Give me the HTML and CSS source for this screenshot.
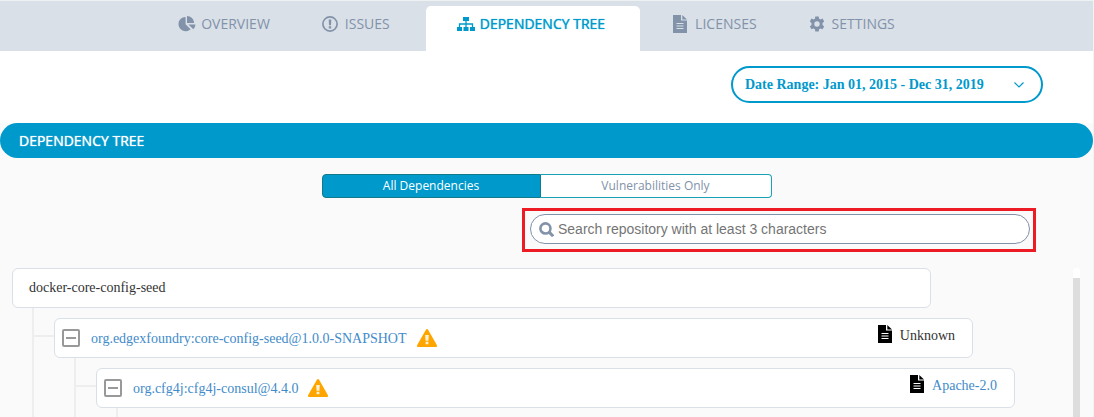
FILE: index.html
```html
<!DOCTYPE html>
<html lang="en">
<head>
<meta charset="utf-8">
<meta name="viewport" content="width=device-width, initial-scale=1">
<title>Dependency Tree</title>
<link rel="stylesheet" href="styles.css">
</head>
<body>
<svg class="sprite" aria-hidden="true">
  <symbol id="i-doc" viewBox="0 0 14 18"><path fill="currentColor" d="M0 0h8v5.500h6V18H0z"/><path fill="currentColor" d="M9.300 0L14 4.500H9.300z"/><path fill="none" stroke="var(--line, #d9e0e8)" d="M3.500 8.500h7M3.500 11h7M3.500 13.500h7"/></symbol>
  <symbol id="i-warn" viewBox="0 0 20 18"><path fill="#ffa500" d="M8.900.7a1.300 1.300 0 0 1 2.200 0l8.700 15.400a1.200 1.200 0 0 1-1.100 1.900H1.300a1.200 1.200 0 0 1-1.100-1.900z"/><path fill="#fff2d6" d="M8.200 6h3.600l-.4 5.700H8.600zM8.600 12.700h2.800v2.600H8.600z"/></symbol>
  <symbol id="i-minus" viewBox="0 0 18 18"><rect x="1" y="1" width="16" height="16" rx="1" fill="#fff" stroke="#999" stroke-width="2"/><path d="M4 9h10" stroke="#999" stroke-width="2"/></symbol>
</svg>

<nav class="tabs">
  <a class="tab" href="#overview"><svg class="icon pie" viewBox="0 0 18 17"><path fill="currentColor" d="M7.500 1v7.700l5.300 5.400A7.600 7.600 0 1 1 7.500 1z"/><path fill="currentColor" d="M9 0a7.700 7.700 0 0 1 7.600 7.500H9zM10.500 9H18a7.500 7.500 0 0 1-2.300 5.200z"/></svg>OVERVIEW</a>
  <a class="tab" href="#issues"><svg class="icon alert" viewBox="0 0 16 16"><circle cx="8" cy="8" r="7.100" fill="none" stroke="currentColor" stroke-width="1.700"/><path fill="currentColor" d="M6.700 3.500h2.600l-.3 5.700H7zM6.800 10.300h2.400v2.200H6.800z"/></svg>ISSUES</a>
  <a class="tab active" href="#tree" aria-current="page"><svg class="icon pie" viewBox="0 0 18 16"><path fill="currentColor" d="M6 1h6v4H6zM0 11h5v4H0zM6.500 11h5v4h-5zM13 11h5v4h-5z"/><path fill="none" stroke="currentColor" stroke-width="1.300" d="M9 5v6M2.500 11V8h13v3"/></svg>DEPENDENCY TREE</a>
  <a class="tab" href="#licenses"><svg class="icon doc"><use href="#i-doc"/></svg>LICENSES</a>
  <a class="tab" href="#settings"><svg class="icon alert" viewBox="0 0 16 16"><path fill="currentColor" fill-rule="evenodd" d="M6.300.5h3.400l.4 2.200 1.300.7 2.100-.8 1.700 2.900-1.700 1.500v1.900l1.700 1.500-1.700 2.900-2.100-.8-1.300.7-.4 2.300H6.300l-.4-2.300-1.300-.7-2.100.8-1.700-2.900 1.700-1.500V7L.8 5.500l1.700-2.900 2.100.8 1.300-.7zM8 5.300a2.700 2.700 0 1 0 0 5.400 2.700 2.700 0 0 0 0-5.400z"/></svg>SETTINGS</a>
</nav>

<div class="filters">
  <button class="range" type="button">Date Range: Jan 01, 2015 - Dec 31, 2019
    <svg class="chevron" viewBox="0 0 12 8"><path fill="none" stroke="currentColor" stroke-width="1.200" d="M1.500 1.500L6 6l4.500-4.500"/></svg>
  </button>
</div>

<main class="panel">
  <h1 class="title">DEPENDENCY TREE</h1>
  <div class="toggle">
    <button class="option selected" type="button" aria-pressed="true">All Dependencies</button>
    <button class="option" type="button" aria-pressed="false">Vulnerabilities Only</button>
  </div>
  <div class="highlight">
    <label class="search">
      <svg class="glass" viewBox="0 0 14 14"><circle cx="6" cy="6" r="4.700" fill="none" stroke="currentColor" stroke-width="2.400"/><path d="M9.200 9.200l4 4" stroke="currentColor" stroke-width="2.800"/></svg>
      <input class="query" type="text" aria-label="Search repository" placeholder="Search repository with at least 3 characters">
    </label>
  </div>
  <div class="viewport">
    <ul class="tree">
      <li class="branch">
        <div class="node root"><span class="name">docker-core-config-seed</span></div>
        <ul class="children">
          <li class="branch child">
            <div class="node">
              <button class="collapse" type="button" aria-label="Collapse"><svg class="box"><use href="#i-minus"/></svg></button>
              <a class="name" href="#seed">org.edgexfoundry:core-config-seed@1.0.0-SNAPSHOT</a>
              <svg class="warn"><use href="#i-warn"/></svg>
              <span class="license"><svg class="file"><use href="#i-doc"/></svg><span class="label">Unknown</span></span>
            </div>
            <ul class="children">
              <li class="branch child">
                <div class="node">
                  <button class="collapse" type="button" aria-label="Collapse"><svg class="box"><use href="#i-minus"/></svg></button>
                  <a class="name" href="#consul">org.cfg4j:cfg4j-consul@4.4.0</a>
                  <svg class="warn"><use href="#i-warn"/></svg>
                  <span class="license"><svg class="file"><use href="#i-doc"/></svg><a class="label" href="#apache">Apache-2.0</a></span>
                </div>
                <ul class="children"></ul>
              </li>
            </ul>
          </li>
        </ul>
      </li>
    </ul>
    <div class="scrollbar"></div>
  </div>
</main>
</body>
</html>
```
FILE: styles.css
```css
* { box-sizing: border-box; }

html, body { height: 100%; }

body {
  margin: 0;
  display: flex;
  flex-direction: column;
  background: #fafafa;
  color: #333;
  font-family: "Liberation Serif", serif;
  font-size: 14px;
  border-right: 1px solid #f0f2f5;
}

a { color: #428bca; text-decoration: none; }
button { font: inherit; cursor: pointer; }
ul { list-style: none; margin: 0; padding: 0; }

.sprite { display: none; }

.tabs {
  display: flex;
  justify-content: center;
  padding-top: 5px;
  padding-right: 20px;
  border-top: 1px solid #eef1f2;
  background: #d9e0e8;
  font-family: "Open Sans", sans-serif;
}

.tab {
  display: flex;
  align-items: center;
  height: 45px;
  padding: 0 26px 10px;
  color: #8292a8;
}

.tab.active {
  margin: 0 7px 0 10px;
  padding: 0 35px 10px 31px;
  border-radius: 5px 5px 0 0;
  background: #fff;
  color: #0099cc;
  text-shadow: 0 0 1px #0099cc;
}

.icon { flex: none; height: 16px; }
.pie { width: 18px; margin-right: 5px; }
.alert { width: 16px; margin-right: 7px; }
.doc { width: 14px; height: 18px; margin-right: 8px; }

.filters {
  display: flex;
  justify-content: flex-end;
  padding: 15px 50px 20px;
  background: #fff;
}

.range {
  display: flex;
  align-items: center;
  justify-content: space-between;
  width: 312px;
  height: 37px;
  padding: 0 16px 0 12px;
  border: 2px solid #0099cc;
  border-radius: 19px;
  background: #fff;
  color: #0099cc;
  font-size: 14px;
  font-weight: bold;
}

.chevron { width: 12px; height: 8px; }

.panel {
  flex: 1;
  min-height: 0;
  display: flex;
  flex-direction: column;
}

.title {
  margin: 0;
  padding: 0 19px;
  border-radius: 18px;
  background: #0099cc;
  color: #fff;
  font: 14px/35px "Open Sans", sans-serif;
  text-shadow: 0 0 1px #fff;
}

.toggle {
  display: flex;
  width: 450px;
  margin: 16px auto 0;
  font-family: "Open Sans", sans-serif;
  font-size: 12px;
}

.option {
  flex: 1;
  height: 24px;
  padding: 0 0 2px;
  border: 1px solid #17a2b8;
  border-left: 0;
  border-radius: 0 4px 4px 0;
  background: #fff;
  color: #8292a8;
}

.option.selected {
  flex: none;
  width: 219px;
  border: 1px solid #117a8b;
  border-radius: 4px 0 0 4px;
  background: #0099cc;
  color: #fff;
}

.highlight {
  align-self: flex-end;
  width: 514px;
  margin: 10px 57px 0 0;
  padding: 3px 3px 5px 5px;
  border: 3px solid #ed1c24;
}

.search {
  display: flex;
  align-items: center;
  height: 30px;
  padding: 0 8px;
  border: 1px solid #8292a8;
  border-radius: 15px;
  background: #fff;
  color: #8292a8;
}

.glass { flex: none; width: 15px; height: 15px; margin-right: 4px; }

.query {
  flex: 1;
  padding: 0;
  border: 0;
  outline: 0;
  background: none;
  font: 14px "Liberation Sans", sans-serif;
}

.query::placeholder { color: #757575; opacity: 1; }

.viewport {
  flex: 1;
  min-height: 0;
  display: flex;
  gap: 58px;
  margin-top: 16px;
  padding: 0 13px 0 12px;
}

.tree {
  flex: 1;
  min-width: 0;
  padding-right: 84px;
}

.node {
  display: flex;
  align-items: center;
  height: 40px;
  padding: 0 17px 0 7px;
  border: 1px solid #d9e0e8;
  border-radius: 6px;
  background: #fff;
  font-size: 14px;
}

.node.root { padding-left: 16px; }

a.name { padding-top: 2px; }

/* Each level steps right by the same amount on both edges. */
.children {
  position: relative;
  margin-right: -42px;
  padding: 10px 0 0 42px;
}

.children:empty { padding-top: 9px; }

.children::before {
  content: "";
  position: absolute;
  top: 0;
  bottom: 0;
  left: 20px;
  border-left: 2px solid #eee;
}

.child { position: relative; }

.child::before {
  content: "";
  position: absolute;
  top: 17px;
  left: -20px;
  width: 20px;
  border-top: 2px solid #eee;
}

.collapse {
  display: flex;
  margin-right: 11px;
  padding: 0;
  border: 0;
  background: none;
}

.box { width: 18px; height: 18px; }
.warn { width: 20px; height: 18px; margin-left: 10px; }

.license {
  --line: #fff;
  display: flex;
  align-items: center;
  margin-left: auto;
  padding-bottom: 8px;
}

.label { padding-top: 4px; }

.file { width: 14px; height: 18px; margin-right: 8px; color: #000; }

.scrollbar {
  width: 7px;
  border-top: 10px solid #fff;
  border-radius: 3px 3px 0 0;
  background: #ddd;
}
```
